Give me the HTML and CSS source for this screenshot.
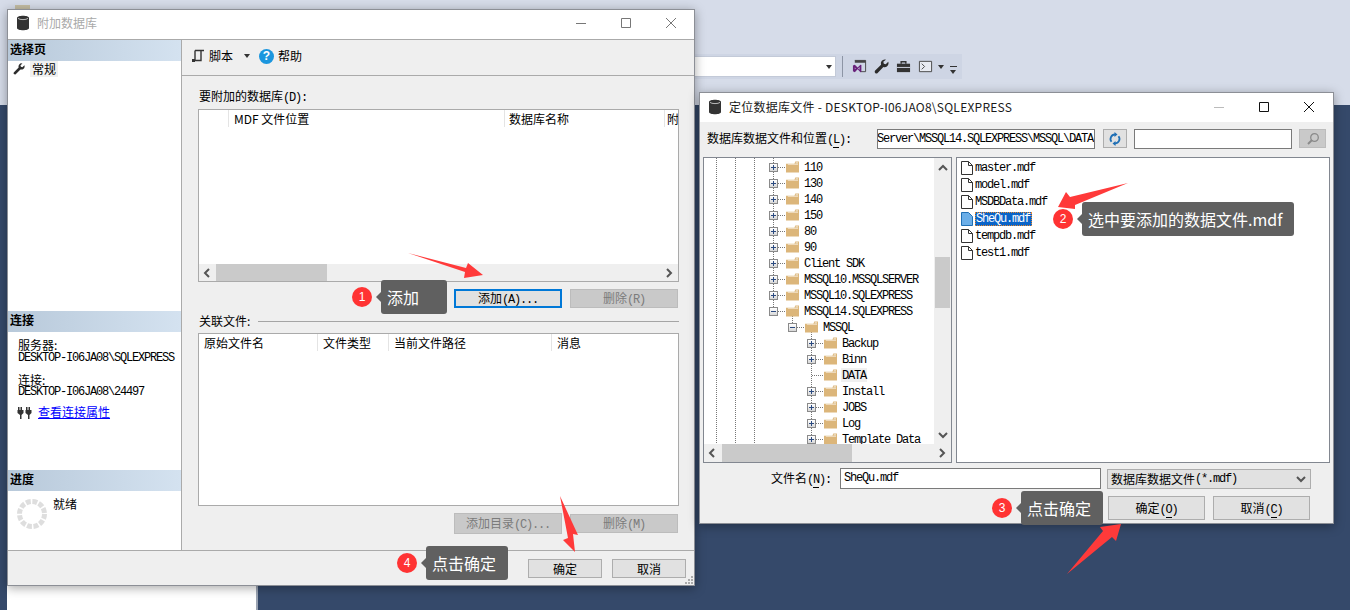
FILE: index.html
```html
<!DOCTYPE html>
<html lang="zh-CN">
<head>
  <meta charset="UTF-8">
  <title>附加数据库</title>
  <link rel="stylesheet" href="styles.css">
</head>
<body>
<svg class="defs" width="0" height="0">
  <symbol id="db" viewBox="0 0 14 16"><path d="M1 3c0-3 12-3 12 0v10c0 3-12 3-12 0z" fill="#333"/><path d="M2 3.4c1.5 1.6 8.500 1.600 10 0" fill="none" stroke="#ddd" stroke-width=".8"/></symbol>
  <symbol id="folder" viewBox="0 0 14 12"><path d="M0 2.500h9L10 0h4v12H0z" fill="#dcb67a"/><path d="M2 3h11M10.500 1.500H13" fill="none" stroke="#f6eddc"/></symbol>
  <symbol id="doc" viewBox="0 0 12 14"><path d="M.5.500h7l4 4v9H.5z" fill="#fff" stroke="#333"/><path d="M7.500.500v4h4" fill="none" stroke="#333"/></symbol>
  <symbol id="wrench" viewBox="0 0 16 16"><path d="M11.500.500a4.200 4.200 0 0 0-4 5.500L1 12.500a1.900 1.900 0 0 0 2.600 2.600L10 8.500a4.200 4.200 0 0 0 5.500-4c0-.6-.1-1-.3-1.500L12.500 5.600l-2-.6-.6-2L12.700.700C12.300.5 12 .5 11.500.500z" fill="#2c2c2c"/></symbol>
  <symbol id="left" viewBox="0 0 8 10"><path d="M6 1 2 5l4 4" fill="none" stroke="#555" stroke-width="2"/></symbol>
  <symbol id="right" viewBox="0 0 8 10"><path d="M2 1l4 4-4 4" fill="none" stroke="#555" stroke-width="2"/></symbol>
  <symbol id="up" viewBox="0 0 10 8"><path d="M1 6l4-4 4 4" fill="none" stroke="#555" stroke-width="2"/></symbol>
  <symbol id="down" viewBox="0 0 10 8"><path d="M1 2l4 4 4-4" fill="none" stroke="#555" stroke-width="2"/></symbol>
  <symbol id="min" viewBox="0 0 12 12"><path d="M1 6.500h10" stroke="currentColor" fill="none"/></symbol>
  <symbol id="max" viewBox="0 0 12 12"><path d="M1.500 1.500h9v9h-9z" stroke="currentColor" fill="none"/></symbol>
  <symbol id="close" viewBox="0 0 12 12"><path d="M1 1l10 10M11 1 1 11" stroke="currentColor" fill="none"/></symbol>
</svg>

<div class="desktop">
  <div class="top-speck"></div>
  <div class="under-panel"></div>

  <!-- toolbar of the main window behind the dialogs -->
  <div class="main-toolbar">
    <div class="combo"><span class="caret"></span></div>
    <span class="tool-sep"></span>
    <svg class="tool-icon" viewBox="0 0 16 16"><path d="M3 1.500h11.500v12H9" fill="none" stroke="#444"/><path d="M3 1.500h11.500v2.500H3z" fill="#444"/><path d="M1 7l2-1 3 3 3-3 1 .5v7l-1 .5-3-3-3 3-2-1zM3 9v2l1-1zM8 8.500 6.500 10 8 11.500z" fill="#68217a"/></svg>
    <svg class="tool-icon"><use href="#wrench"/></svg>
    <svg class="tool-icon" viewBox="0 0 16 16"><path d="M1 5h14v9H1z" fill="#333"/><path d="M5.500 5V3h5v2" fill="none" stroke="#333" stroke-width="1.500"/><path d="M1 9h14" stroke="#d6dce9"/></svg>
    <svg class="tool-icon" viewBox="0 0 16 16"><path d="M1.500 2.500h13v11h-13z" fill="#e8ebf2" stroke="#444"/><path d="M4 5l3 3-3 3" fill="none" stroke="#444"/></svg>
    <span class="caret small"></span>
    <span class="overflow"></span>
  </div>

  <!-- attach database dialog -->
  <div class="window attach">
    <div class="titlebar">
      <svg class="title-icon"><use href="#db"/></svg>
      <span class="title-text">附加数据库</span>
      <div class="controls">
        <svg><use href="#min"/></svg>
        <svg><use href="#max"/></svg>
        <svg><use href="#close"/></svg>
      </div>
    </div>
    <div class="attach-main">
      <div class="side">
        <div class="side-sec sec-pages">
          <div class="side-head">选择页</div>
          <div class="page-item">
            <svg class="page-icon"><use href="#wrench"/></svg>
            <span class="page-label">常规</span>
          </div>
        </div>
        <div class="side-sec sec-conn">
          <div class="side-head">连接</div>
          <div class="conn-info">
            <div>服务器:</div>
            <div class="mono">DESKTOP-I06JA08\SQLEXPRESS</div>
            <div class="conn-gap">连接:</div>
            <div class="mono">DESKTOP-I06JA08\24497</div>
          </div>
          <div class="conn-link">
            <svg class="plug" viewBox="0 0 15 13"><path d="M1 1h1.500v3h1V1H5v3h1.500v3L4.500 9v4H3V9L.5 7V4H1zM9 1h1.500v3h1V1H13v3h1.500v3l-2 2v4H11V9L8.500 7V4H9z" fill="#333"/></svg>
            <a class="link">查看连接属性</a>
          </div>
        </div>
        <div class="side-sec sec-prog">
          <div class="side-head">进度</div>
          <div class="prog">
            <svg class="spinner" viewBox="0 0 30 30"><circle cx="15" cy="15" r="12.500" fill="none" stroke="#dedede" stroke-width="5" stroke-dasharray="4.900 1.645"/></svg>
            <span>就绪</span>
          </div>
        </div>
      </div>
      <div class="content">
        <div class="content-bar">
          <svg class="bar-icon" viewBox="0 0 14 14"><path d="M4 1.500h9M4 1.500v10M10 2v9.500H1.500" fill="none" stroke="#333" stroke-width="1.400"/><path d="M1 10h3v3H1z" fill="#333"/></svg>
          <span>脚本</span>
          <span class="caret bar-caret"></span>
          <span class="help">?</span>
          <span>帮助</span>
        </div>
        <div class="content-body">
          <div class="field-label">要附加的数据库<span class="mono">(D):</span></div>
          <div class="grid grid-top">
            <div class="grid-head">
              <span class="col col-a"></span>
              <span class="col col-b">MDF 文件位置</span>
              <span class="col col-c">数据库名称</span>
              <span class="col col-d">附</span>
            </div>
            <div class="grid-fill"></div>
            <div class="hscroll">
              <svg class="arrow-h"><use href="#left"/></svg>
              <span class="hthumb grid-thumb"></span>
              <svg class="arrow-h end"><use href="#right"/></svg>
            </div>
          </div>
          <div class="btn-row row-add">
            <button class="btn focus">添加<span class="mono">(A)...</span></button>
            <button class="btn off">删除<span class="mono">(R)</span></button>
          </div>
          <div class="related">关联文件:<span class="rule"></span></div>
          <div class="grid grid-bottom">
            <div class="grid-head">
              <span class="col col-e">原始文件名</span>
              <span class="col col-f">文件类型</span>
              <span class="col col-g">当前文件路径</span>
              <span class="col col-h">消息</span>
            </div>
          </div>
          <div class="btn-row row-dir">
            <button class="btn off tall">添加目录<span class="mono">(C)...</span></button>
            <button class="btn off">删除<span class="mono">(M)</span></button>
          </div>
        </div>
      </div>
    </div>
    <div class="attach-foot">
      <button class="btn foot-btn">确定</button>
      <button class="btn foot-btn">取消</button>
      <svg class="grip" viewBox="0 0 8 8"><path d="M6 0h2v2H6zM3 3h2v2H3zM6 3h2v2H6zM0 6h2v2H0zM3 6h2v2H3zM6 6h2v2H6z" fill="#aaa"/></svg>
    </div>
  </div>

  <!-- locate database files dialog -->
  <div class="window locate">
    <div class="titlebar">
      <svg class="title-icon"><use href="#db"/></svg>
      <span class="title-text dark">定位数据库文件 - DESKTOP-I06JAO8\SQLEXPRESS</span>
      <div class="controls dark-controls">
        <svg class="faint"><use href="#min"/></svg>
        <svg><use href="#max"/></svg>
        <svg><use href="#close"/></svg>
      </div>
    </div>
    <div class="path-row">
      <span class="path-label">数据库数据文件和位置<span class="mono key">(L):</span></span>
      <div class="input path-input mono"><span>Microsoft SQL Server\MSSQL14.SQLEXPRESS\MSSQL\DATA</span></div>
      <button class="icon-btn refresh">
        <svg viewBox="0 0 14 14"><path d="M7 2.500a4.500 4.500 0 0 0-3.500 7.300M7 11.500a4.500 4.500 0 0 0 3.500-7.300" fill="none" stroke="#1f6fb5" stroke-width="1.800"/><path d="M6.500 0v5L9.500 2.500zM7.500 14V9L4.500 11.500z" fill="#1f6fb5"/></svg>
      </button>
      <div class="input search-input"></div>
      <button class="icon-btn search-btn">
        <svg viewBox="0 0 14 14"><circle cx="8.500" cy="5.500" r="3.800" fill="none" stroke="#8a8a8a" stroke-width="1.300"/><path d="M6 8 2 12" stroke="#8a8a8a" stroke-width="2"/></svg>
      </button>
    </div>
    <div class="panes">
      <div class="pane tree">
        <div class="tree-top">
          <div class="tree-list mono">
            <div class="tree-row l0"><i class="exp"></i><i class="dots"></i><svg class="folder"><use href="#folder"/></svg><span>110</span></div>
            <div class="tree-row l0"><i class="exp"></i><i class="dots"></i><svg class="folder"><use href="#folder"/></svg><span>130</span></div>
            <div class="tree-row l0"><i class="exp"></i><i class="dots"></i><svg class="folder"><use href="#folder"/></svg><span>140</span></div>
            <div class="tree-row l0"><i class="exp"></i><i class="dots"></i><svg class="folder"><use href="#folder"/></svg><span>150</span></div>
            <div class="tree-row l0"><i class="exp"></i><i class="dots"></i><svg class="folder"><use href="#folder"/></svg><span>80</span></div>
            <div class="tree-row l0"><i class="exp"></i><i class="dots"></i><svg class="folder"><use href="#folder"/></svg><span>90</span></div>
            <div class="tree-row l0"><i class="exp"></i><i class="dots"></i><svg class="folder"><use href="#folder"/></svg><span>Client SDK</span></div>
            <div class="tree-row l0"><i class="exp"></i><i class="dots"></i><svg class="folder"><use href="#folder"/></svg><span>MSSQL10.MSSQLSERVER</span></div>
            <div class="tree-row l0"><i class="exp"></i><i class="dots"></i><svg class="folder"><use href="#folder"/></svg><span>MSSQL10.SQLEXPRESS</span></div>
            <div class="tree-row l0"><i class="exp open"></i><i class="dots"></i><svg class="folder"><use href="#folder"/></svg><span>MSSQL14.SQLEXPRESS</span></div>
            <div class="tree-row l1"><i class="exp open"></i><i class="dots"></i><svg class="folder"><use href="#folder"/></svg><span>MSSQL</span></div>
            <div class="tree-row l2"><i class="exp"></i><i class="dots"></i><svg class="folder"><use href="#folder"/></svg><span>Backup</span></div>
            <div class="tree-row l2"><i class="exp"></i><i class="dots"></i><svg class="folder"><use href="#folder"/></svg><span>Binn</span></div>
            <div class="tree-row l2"><i class="exp none"></i><i class="dots"></i><svg class="folder"><use href="#folder"/></svg><span class="current">DATA</span></div>
            <div class="tree-row l2"><i class="exp"></i><i class="dots"></i><svg class="folder"><use href="#folder"/></svg><span>Install</span></div>
            <div class="tree-row l2"><i class="exp"></i><i class="dots"></i><svg class="folder"><use href="#folder"/></svg><span>JOBS</span></div>
            <div class="tree-row l2"><i class="exp"></i><i class="dots"></i><svg class="folder"><use href="#folder"/></svg><span>Log</span></div>
            <div class="tree-row l2"><i class="exp"></i><i class="dots"></i><svg class="folder"><use href="#folder"/></svg><span>Template Data</span></div>
          </div>
          <div class="vscroll">
            <svg class="arrow-v"><use href="#up"/></svg>
            <span class="vthumb"></span>
            <svg class="arrow-v end"><use href="#down"/></svg>
          </div>
        </div>
        <div class="hscroll tree-h">
          <svg class="arrow-h"><use href="#left"/></svg>
          <span class="hthumb tree-thumb"></span>
          <svg class="arrow-h end"><use href="#right"/></svg>
        </div>
      </div>
      <div class="pane files mono">
        <div class="file"><svg class="doc"><use href="#doc"/></svg><span>master.mdf</span></div>
        <div class="file"><svg class="doc"><use href="#doc"/></svg><span>model.mdf</span></div>
        <div class="file"><svg class="doc"><use href="#doc"/></svg><span>MSDBData.mdf</span></div>
        <div class="file selected"><svg class="doc" viewBox="0 0 12 14"><path d="M.5.500h7l4 4v9H.5z" fill="#6aaee8" stroke="#1f6fb5"/></svg><span>SheQu.mdf</span></div>
        <div class="file"><svg class="doc"><use href="#doc"/></svg><span>tempdb.mdf</span></div>
        <div class="file"><svg class="doc"><use href="#doc"/></svg><span>test1.mdf</span></div>
      </div>
    </div>
    <div class="name-row">
      <span class="name-label">文件名<span class="mono key">(N):</span></span>
      <div class="input name-input mono">SheQu.mdf</div>
      <div class="type-select">数据库数据文件<span class="mono">(*.mdf)</span>
        <svg class="type-arrow"><use href="#down"/></svg>
      </div>
    </div>
    <div class="locate-btns">
      <button class="btn locate-btn">确定<span class="mono key">(O)</span></button>
      <button class="btn locate-btn">取消<span class="mono key">(C)</span></button>
    </div>
  </div>

  <!-- annotations -->
  <svg class="arrows" viewBox="0 0 1350 610">
    <path d="M408 253 466 268 468 263 483 275 464 278 465 272z"/>
    <path d="M1128 183 1075 205 1075 209 1058 207 1066 192 1070 197z"/>
    <path d="M1067 574 1103 531 1100 527 1121 524 1116 541 1112 537z"/>
    <path d="M560 496 578 535 573 534 575 552 563 540 568 538z"/>
  </svg>
  <div class="callout c1"><span class="badge">1</span><span class="bubble">添加</span></div>
  <div class="callout c2"><span class="badge">2</span><span class="bubble">选中要添加的数据文件.mdf</span></div>
  <div class="callout c3"><span class="badge">3</span><span class="bubble">点击确定</span></div>
  <div class="callout c4"><span class="badge">4</span><span class="bubble">点击确定</span></div>
</div>
</body>
</html>
```

FILE: styles.css
```css
* {
  box-sizing: border-box;
}

body {
  margin: 0;
  font-family: "Noto Sans CJK SC", "Liberation Sans", sans-serif;
  font-size: 12px;
  line-height: 14px;
  color: #000;
}

.defs {
  position: absolute;
}

.mono {
  font-family: "Liberation Mono", "Noto Sans CJK SC", monospace;
  font-size: 12px;
  letter-spacing: -1.2px;
  line-height: 12px;
}

/* underline under the access key letter */
.key {
  position: relative;
}

.key::after {
  content: "";
  position: absolute;
  left: 6px;
  bottom: -1px;
  width: 6px;
  height: 1px;
  background: currentColor;
}

.desktop {
  position: relative;
  width: 1350px;
  height: 610px;
  overflow: hidden;
  background: linear-gradient(#d6dce9 0 105px, #35496a 105px);
}

.top-speck {
  position: absolute;
  left: 15px;
  top: 5px;
  width: 15px;
  height: 4px;
  background: #c4bda4;
}

.under-panel {
  position: absolute;
  left: 7px;
  top: 580px;
  width: 251px;
  height: 30px;
  background: #fff;
  border-right: 2px solid #9aa3b2;
}

/* main window toolbar */
.main-toolbar {
  position: absolute;
  left: 690px;
  top: 54px;
  width: 272px;
  height: 25px;
  background: #ced5e4;
  display: flex;
  align-items: center;
}

.combo {
  width: 146px;
  height: 21px;
  background: #fff;
  border: 1px solid #c3cad8;
  display: flex;
  align-items: center;
  justify-content: flex-end;
  padding-right: 3px;
}

.caret {
  display: inline-block;
  width: 0;
  height: 0;
  border: 3.500px solid transparent;
  border-top: 4px solid #333;
  border-bottom: 0;
}

.tool-sep {
  width: 1px;
  height: 21px;
  background: #8d95a5;
  margin: 0 9px 0 6px;
}

.tool-icon {
  width: 15px;
  height: 15px;
  margin-right: 7px;
}

.caret.small {
  margin-left: -2px;
}

.overflow {
  width: 7px;
  height: 8px;
  margin: 7px 0 0 6px;
  border-top: 1px solid #333;
  position: relative;
}

.overflow::after {
  content: "";
  position: absolute;
  left: 0;
  top: 3px;
  border: 3.500px solid transparent;
  border-top: 4px solid #333;
  border-bottom: 0;
}

/* windows */
.window {
  position: absolute;
  background: #efefef;
  border: 1px solid #8c8f96;
  box-shadow: 0 2px 10px rgba(0, 0, 0, 0.35);
  display: flex;
  flex-direction: column;
}

.attach {
  left: 7px;
  top: 9px;
  width: 688px;
  height: 577px;
}

.locate {
  left: 699px;
  top: 92px;
  width: 635px;
  height: 432px;
}

.titlebar {
  height: 29px;
  flex: none;
  background: #fff;
  display: flex;
  align-items: center;
  padding: 0 0 1px 8px;
}

.attach .titlebar {
  padding-bottom: 3px;
}

.title-icon {
  width: 14px;
  height: 16px;
  margin-right: 7px;
}

.title-text {
  color: #a9a9a9;
}

.title-text.dark {
  color: #1a1a1a;
  letter-spacing: 0.25px;
  white-space: nowrap;
}

.controls {
  margin-left: auto;
  display: flex;
  color: #777;
}

.controls svg {
  width: 12px;
  height: 12px;
  margin: 0 17px 0 16px;
}

.dark-controls {
  color: #111;
  margin-right: 1px;
}

.controls svg.faint {
  color: #bbb;
}

/* attach dialog */
.attach-main {
  flex: none;
  height: 512px;
  display: flex;
  min-height: 0;
  border-top: 1px solid #aaa;
  border-bottom: 1px solid #aaa;
}

.side {
  width: 174px;
  flex: none;
  background: #fff;
  border-right: 1px solid #aaa;
  display: flex;
  flex-direction: column;
}

.sec-pages {
  height: 271px;
}

.sec-conn {
  height: 159px;
}

.sec-prog {
  flex: 1;
}

.side-head {
  height: 21px;
  padding: 2px 2px 0;
  font-weight: 700;
  background: linear-gradient(90deg, #b8c9da, #d4e2f0);
}

.page-item {
  display: flex;
  align-items: center;
  height: 16px;
  padding-left: 5px;
}

.page-icon {
  width: 12px;
  height: 12px;
  margin-right: 5px;
}

.page-label {
  background: #f0f0f0;
  padding: 1px 2px;
}

.conn-info {
  padding: 7px 0 0 10px;
  line-height: 12px;
}

.conn-info div {
  white-space: nowrap;
}

.conn-info div:nth-child(2) {
  margin-top: 1px;
}

.conn-gap {
  margin-top: 10px;
}

.conn-link {
  display: flex;
  align-items: center;
  padding: 7px 0 0 9px;
}

.plug {
  width: 15px;
  height: 13px;
  margin-right: 6px;
}

.link {
  color: #00f;
  text-decoration: underline;
}

.prog {
  display: flex;
  align-items: flex-start;
  padding: 6px 0 0 9px;
}

.spinner {
  width: 30px;
  height: 30px;
  margin: 2px 6px 0 0;
}

.content {
  flex: 1;
  min-width: 0;
  display: flex;
  flex-direction: column;
}

.content-bar {
  height: 36px;
  flex: none;
  display: flex;
  align-items: center;
  padding: 0 0 3px 9px;
  border-bottom: 1px solid #aaa;
}

.bar-icon {
  width: 14px;
  height: 14px;
  margin-right: 4px;
}

.bar-caret {
  margin: 0 9px 0 11px;
}

.help {
  width: 15px;
  height: 15px;
  border-radius: 50%;
  background: #1b96de;
  color: #fff;
  font-family: "Liberation Sans", sans-serif;
  font-size: 12px;
  font-weight: 700;
  line-height: 15px;
  text-align: center;
  margin-right: 4px;
}

.content-body {
  flex: 1;
  padding: 13px 16px 0;
}

.field-label {
  margin-left: 1px;
  height: 14px;
}

.grid {
  width: 481px;
  height: 173px;
  background: #fff;
  border: 1px solid #aaa;
  display: flex;
  flex-direction: column;
}

.grid-top {
  margin-top: 6px;
}

.grid-bottom {
  margin-top: 5px;
}

.grid-head {
  height: 18px;
  flex: none;
  display: flex;
  overflow: hidden;
  white-space: nowrap;
}

.col {
  border-right: 1px solid #e4e4e4;
  padding: 2px 0 0 5px;
  flex: none;
  height: 17px;
}

.col-a { width: 30px; }
.col-b { width: 276px; }
.col-c { width: 160px; padding-left: 4px; }
.col-d { border: 0; width: 13px; padding-left: 2px; }
.col-e { width: 119px; }
.col-f { width: 71px; }
.col-g { width: 163px; }
.col-h { border: 0; width: 100px; }

.grid-fill {
  flex: 1;
}

.hscroll {
  height: 17px;
  flex: none;
  background: #efefef;
  display: flex;
  align-items: center;
  position: relative;
}

.arrow-h {
  width: 8px;
  height: 10px;
  margin: 0 4px;
  flex: none;
}

.arrow-h.end {
  margin-left: auto;
  margin-right: 5px;
}

.hthumb {
  display: block;
  height: 100%;
  background: #cacaca;
}

.grid-thumb {
  width: 111px;
  margin-left: 1px;
}

.btn-row {
  display: flex;
  justify-content: flex-end;
  gap: 8px;
  width: 480px;
}

.row-add {
  margin-top: 7px;
}

.row-dir {
  margin-top: 7px;
  align-items: center;
}

.btn {
  height: 19px;
  width: 108px;
  padding: 0;
  background: #e1e1e1;
  border: 1px solid #adadad;
  font: inherit;
  color: #000;
}

.btn.focus {
  border: 2px solid #0078d7;
}

.btn.off {
  background: #c9c9c9;
  border-color: #bcbcbc;
  color: #7b7b7b;
}

.btn.tall {
  height: 21px;
}

.related {
  display: flex;
  align-items: center;
  height: 14px;
  margin: 6px 0 0 1px;
  width: 480px;
}

.rule {
  flex: 1;
  height: 1px;
  background: #a5a5a5;
  margin-left: 8px;
}

.attach-foot {
  flex: 1;
  display: flex;
  justify-content: flex-end;
  gap: 10px;
  padding: 8px 8px 0 0;
  position: relative;
}

.foot-btn {
  width: 74px;
}

.grip {
  position: absolute;
  right: 1px;
  bottom: 1px;
  width: 8px;
  height: 8px;
}

/* locate dialog */
.path-row {
  display: flex;
  align-items: center;
  height: 21px;
  margin-top: 6px;
  padding-left: 7px;
}

.path-label {
  width: 170px;
  flex: none;
  white-space: nowrap;
}

.input {
  background: #fff;
  border: 1px solid #7a7a7a;
  height: 20px;
}

.path-input {
  width: 218px;
  overflow: hidden;
  display: flex;
  justify-content: flex-end;
  align-items: center;
  padding-right: 1px;
  white-space: nowrap;
}

.icon-btn {
  height: 19px;
  padding: 0;
  border: 1px solid #adadad;
  background: #e1e1e1;
  display: flex;
  align-items: center;
  justify-content: center;
}

.icon-btn svg {
  width: 14px;
  height: 14px;
}

.refresh {
  width: 24px;
  margin: 0 7px 0 8px;
}

.search-input {
  width: 158px;
  margin-right: 7px;
}

.search-btn {
  width: 27px;
  background: #c9c9c9;
  border-color: #bcbcbc;
}

.panes {
  display: flex;
  gap: 4px;
  height: 306px;
  margin: 8px 0 0 3px;
  flex: none;
}

.pane {
  background: #fff;
  border: 1px solid #828790;
}

.tree {
  width: 249px;
  display: flex;
  flex-direction: column;
}

.tree-top {
  flex: 1;
  display: flex;
  min-height: 0;
}

.tree-list {
  flex: 1;
  overflow: hidden;
  padding-top: 1px;
  background-image:
    repeating-linear-gradient(#777 0 1px, transparent 1px 2px),
    repeating-linear-gradient(#777 0 1px, transparent 1px 2px),
    repeating-linear-gradient(#777 0 1px, transparent 1px 2px),
    repeating-linear-gradient(#777 0 1px, transparent 1px 2px),
    repeating-linear-gradient(#777 0 1px, transparent 1px 2px),
    repeating-linear-gradient(#777 0 1px, transparent 1px 2px);
  background-repeat: no-repeat;
  background-size: 1px 100%, 1px 100%, 1px 100%, 1px 150px, 1px 20px, 1px 120px;
  background-position: 12px 0, 31px 0, 50px 0, 69px 0, 88px 152px, 107px 172px;
}

.tree-row {
  height: 16px;
  display: flex;
  align-items: center;
  white-space: nowrap;
}

.tree-row span {
  padding-top: 2px;
}

.l0 { padding-left: 65px; }
.l1 { padding-left: 84px; }
.l2 { padding-left: 103px; }

.exp {
  width: 9px;
  height: 9px;
  flex: none;
  border: 1px solid #8a8a8a;
  background: linear-gradient(#fff, #d8d8d8);
  position: relative;
}

.exp::before {
  content: "";
  position: absolute;
  left: 1px;
  top: 3px;
  width: 5px;
  height: 1px;
  background: #2b4a80;
}

.exp::after {
  content: "";
  position: absolute;
  left: 3px;
  top: 1px;
  width: 1px;
  height: 5px;
  background: #2b4a80;
}

.exp.open::after {
  display: none;
}

.exp.none {
  border: 0;
  background: none;
}

.exp.none::before,
.exp.none::after {
  display: none;
}

.dots {
  width: 7px;
  height: 1px;
  flex: none;
  background: repeating-linear-gradient(90deg, #777 0 1px, transparent 1px 2px);
}

.exp.none + .dots {
  margin-left: -4px;
  width: 11px;
}

.folder {
  width: 13px;
  height: 12px;
  margin: 0 5px 0 1px;
  flex: none;
}

.current {
  background: #f0f0f0;
  padding: 2px 1px 0;
  margin-left: -1px;
}

.vscroll {
  width: 17px;
  flex: none;
  background: #efefef;
  display: flex;
  flex-direction: column;
  align-items: center;
}

.arrow-v {
  width: 10px;
  height: 8px;
  margin-top: 6px;
  flex: none;
}

.arrow-v.end {
  margin-top: auto;
  margin-bottom: 5px;
}

.vthumb {
  display: block;
  width: 15px;
  height: 51px;
  margin-top: 85px;
  background: #cacaca;
}

.tree-h {
  height: 18px;
}

.tree-thumb {
  width: 130px;
  margin-left: 2px;
}

.files {
  width: 374px;
  padding-top: 1px;
}

.file {
  height: 17px;
  display: flex;
  align-items: center;
  padding-left: 4px;
  white-space: nowrap;
}

.doc {
  width: 12px;
  height: 14px;
  margin-right: 2px;
  flex: none;
}

.selected span {
  background: #0a64c8;
  color: #fff;
  outline: 1px dotted #e8882c;
  outline-offset: -1px;
  padding: 1px 2px 1px 1px;
}

.name-row {
  display: flex;
  align-items: center;
  margin-top: 5px;
  padding-left: 71px;
  height: 21px;
  flex: none;
}

.name-label {
  width: 69px;
  white-space: nowrap;
}

.name-input {
  width: 261px;
  height: 21px;
  padding: 3px 0 0 3px;
}

.type-select {
  width: 204px;
  height: 20px;
  margin-left: 6px;
  background: #e1e1e1;
  border: 1px solid #adadad;
  display: flex;
  align-items: center;
  padding-left: 3px;
  white-space: nowrap;
}

.type-arrow {
  width: 10px;
  height: 8px;
  margin-left: auto;
  margin-right: 4px;
}

.locate-btns {
  display: flex;
  justify-content: flex-end;
  gap: 8px;
  margin-top: 7px;
  padding-right: 23px;
}

.locate-btn {
  width: 97px;
  height: 24px;
}

/* annotations */
.arrows {
  position: absolute;
  left: 0;
  top: 0;
  width: 1350px;
  height: 610px;
  fill: #ff3a3a;
}

.callout {
  position: absolute;
  display: flex;
  align-items: center;
  gap: 9px;
  height: 34px;
}

.c1 { left: 352px; top: 280px; }
.c2 { left: 1053px; top: 202px; }
.c3 { left: 992px; top: 491px; }
.c4 { left: 397px; top: 546px; }

.badge {
  width: 20px;
  height: 20px;
  border-radius: 50%;
  background: #ff3333;
  color: #fff;
  font-family: "Liberation Sans", sans-serif;
  font-size: 12px;
  line-height: 20px;
  text-align: center;
}

.bubble {
  position: relative;
  height: 34px;
  padding: 0 12px 0 6px;
  background: #606060;
  border-radius: 3px;
  color: #fff;
  font-size: 16px;
  line-height: 34px;
  white-space: nowrap;
}

.c1 .bubble {
  padding-right: 28px;
}

.bubble::before {
  content: "";
  position: absolute;
  left: -5px;
  top: 12px;
  border: 5px solid transparent;
  border-right-color: #606060;
  border-left: 0;
}
```
